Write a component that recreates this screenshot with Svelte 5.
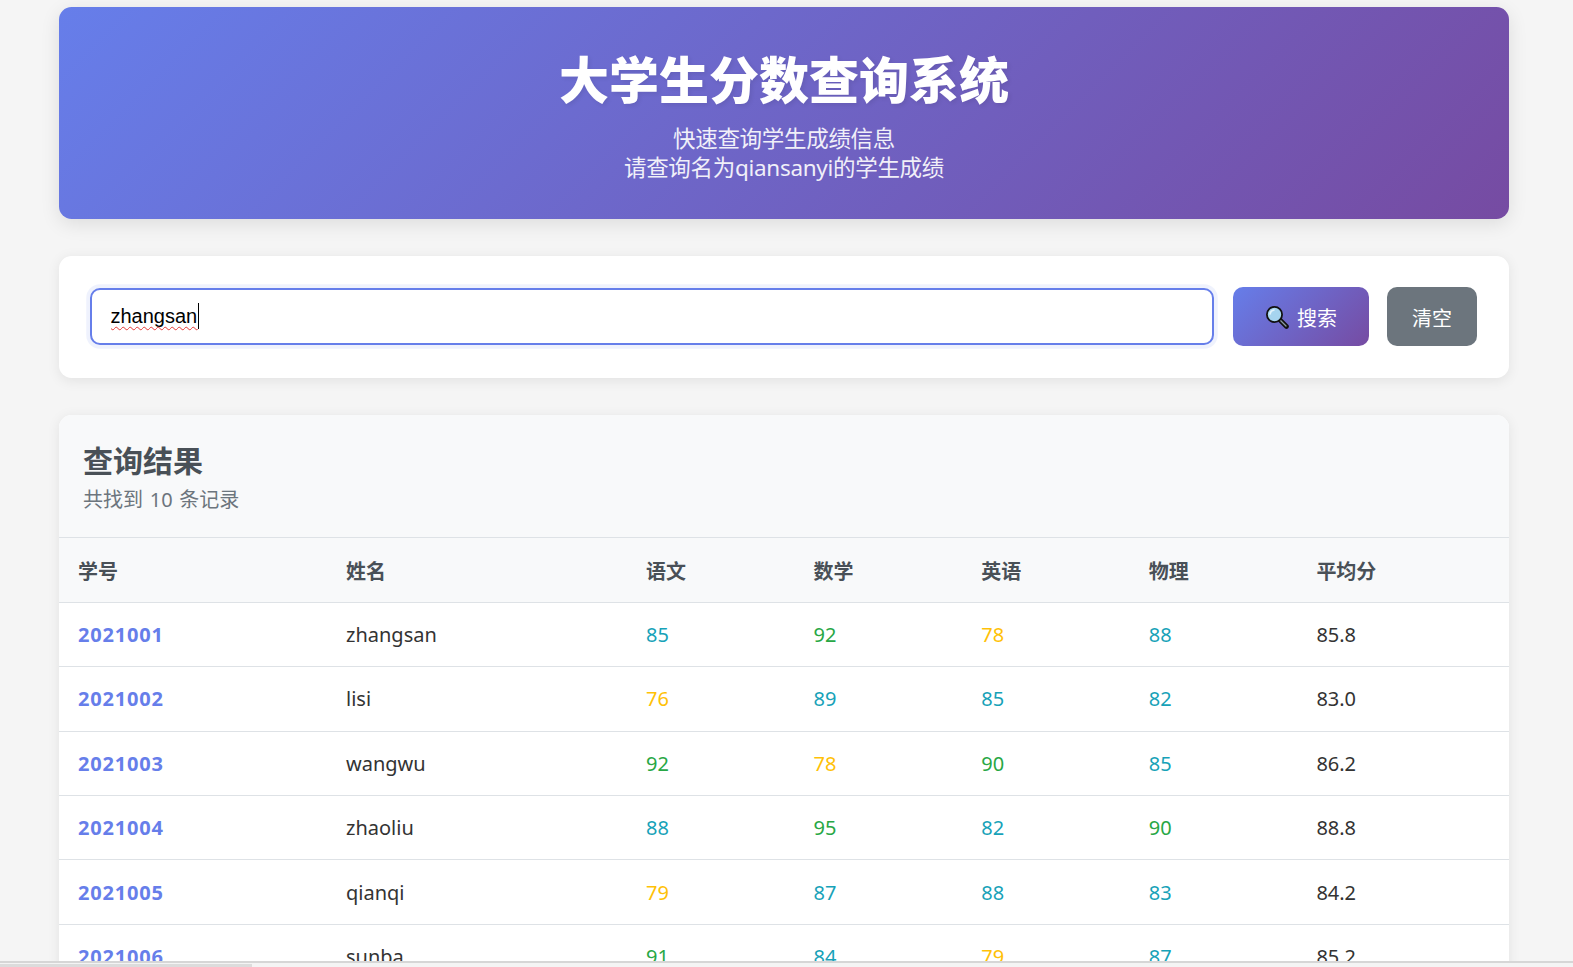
<script>
  const rows = [
    ['2021001', 'zhangsan', [85, 92, 78, 88], '85.8'],
    ['2021002', 'lisi', [76, 89, 85, 82], '83.0'],
    ['2021003', 'wangwu', [92, 78, 90, 85], '86.2'],
    ['2021004', 'zhaoliu', [88, 95, 82, 90], '88.8'],
    ['2021005', 'qianqi', [79, 87, 88, 83], '84.2'],
    ['2021006', 'sunba', [91, 84, 79, 87], '85.2']
  ];
  const heads = ['学号', '姓名', '语文', '数学', '英语', '物理', '平均分'];
  const grade = (s) => (s >= 90 ? 'excellent' : s >= 80 ? 'good' : 'pass');
</script>

<div class="page">
  <main class="container">
    <header class="hero">
      <h1>大学生分数查询系统</h1>
      <p>快速查询学生成绩信息<br />请查询名为qiansanyi的学生成绩</p>
    </header>

    <section class="search">
      <div class="field">
        <input type="text" value="zhangsan" spellcheck="false" />
        <span class="squiggle" aria-hidden="true">zhangsan</span>
      </div>
      <button class="btn primary">
        <svg class="lens" viewBox="0 0 24 24" width="24" height="24" aria-hidden="true">
          <path d="M14.5 14.5 L21.5 21.5" stroke="#111" stroke-width="4.6" stroke-linecap="round" />
          <path d="M15.5 15.5 L21 21" stroke="#8a9aa0" stroke-width="1.4" stroke-linecap="round" />
          <circle cx="9.5" cy="9.5" r="7.6" fill="#a6d4ef" stroke="#111" stroke-width="1.8" />
          <path d="M5 9 A5 5 0 0 1 9 5" fill="none" stroke="#e4f4fc" stroke-width="1.6" stroke-linecap="round" />
        </svg>
        <span>搜索</span>
      </button>
      <button class="btn secondary">清空</button>
    </section>

    <section class="results">
      <div class="results-head">
        <h2>查询结果</h2>
        <p>共找到 10 条记录</p>
      </div>
      <table>
        <thead>
          <tr>
            {#each heads as h}<th>{h}</th>{/each}
          </tr>
        </thead>
        <tbody>
          {#each rows as r}
            <tr>
              <td class="id">{r[0]}</td>
              <td>{r[1]}</td>
              {#each r[2] as s}<td class={grade(s)}>{s}</td>{/each}
              <td>{r[3]}</td>
            </tr>
          {/each}
        </tbody>
      </table>
    </section>
  </main>
  <div class="scrollbar" aria-hidden="true"><div class="thumb"></div></div>
</div>

<style>
  :global(body) {
    margin: 0;
    background: #f5f5f5;
    overflow: hidden;
  }
  .page {
    height: 967px;
    overflow: hidden;
    position: relative;
    font-family: "Noto Sans", "Noto Sans CJK SC", sans-serif;
    color: #333;
  }
  .container {
    width: 1450px;
    margin-left: 59px;
    padding-top: 7px;
  }
  .hero {
    height: 212px;
    box-sizing: border-box;
    padding-top: 35px;
    border-radius: 12.5px;
    background: linear-gradient(135deg, #667eea 0%, #764ba2 100%);
    box-shadow: 0 5px 19px rgba(0, 0, 0, 0.1);
    color: #fff;
    text-align: center;
  }
  .hero h1 {
    margin: 0 0 12px;
    font-size: 50px;
    line-height: 70px;
    font-weight: 900;
    font-family: "Noto Sans CJK SC", sans-serif;
    text-shadow: 2px 2px 4px rgba(0, 0, 0, 0.08);
  }
  .hero p {
    margin: 0;
    font-size: 22.5px;
    line-height: 29px;
    letter-spacing: -0.3px;
    opacity: 0.9;
  }
  .search {
    margin-top: 37px;
    height: 122px;
    box-sizing: border-box;
    padding: 31px 32px 32px 31px;
    display: flex;
    gap: 18px;
    align-items: center;
    background: #fff;
    border-radius: 12.5px;
    box-shadow: 0 2.5px 12.5px rgba(0, 0, 0, 0.08);
  }
  .field {
    flex: 1;
    position: relative;
    margin-right: 1px;
  }
  input {
    display: block;
    width: 100%;
    height: 57px;
    box-sizing: border-box;
    padding: 0 18.5px;
    border: 2.5px solid #667eea;
    border-radius: 10px;
    outline: none;
    box-shadow: 0 0 0 3.75px rgba(102, 126, 234, 0.1);
    font: 20px "Liberation Sans", sans-serif;
    color: #000;
  }
  .squiggle {
    position: absolute;
    left: 21px;
    top: 15px;
    font: 20px/26px "Liberation Sans", sans-serif;
    color: transparent;
    text-decoration: underline wavy #e53935 1.2px;
    text-decoration-skip-ink: none;
    text-underline-offset: 3px;
    border-right: 1px solid #000;
  }
  .btn {
    height: 59px;
    border: 0;
    border-radius: 10px;
    color: #fff;
    font-size: 20px;
    font-family: "Noto Sans CJK SC", sans-serif;
    display: inline-flex;
    align-items: center;
    justify-content: center;
    padding: 1px 0 0;
  }
  .primary {
    width: 136px;
    gap: 8px;
    background: linear-gradient(135deg, #667eea 0%, #764ba2 100%);
  }
  .secondary {
    width: 90px;
    background: #6c757d;
  }
  .results {
    margin-top: 37px;
    background: #fff;
    border-radius: 12.5px 12.5px 0 0;
    box-shadow: 0 2.5px 12.5px rgba(0, 0, 0, 0.08);
    overflow: hidden;
  }
  .results-head {
    height: 123px;
    box-sizing: border-box;
    padding: 23px 24px 0;
    background: #f8f9fa;
    border-bottom: 1px solid #dee2e6;
  }
  .results-head h2 {
    margin: 0;
    font-size: 30px;
    line-height: 42px;
    font-weight: 700;
    color: #495057;
    font-family: "Noto Sans CJK SC", sans-serif;
  }
  .results-head p {
    margin: 6px 0 0;
    font-size: 20px;
    line-height: 28px;
    word-spacing: 1.5px;
    color: #6c757d;
  }
  table {
    width: 100%;
    border-collapse: collapse;
    table-layout: fixed;
    font-size: 20px;
  }
  th,
  td {
    height: 64.4px;
    box-sizing: border-box;
    padding: 1px 19px 0;
    text-align: left;
    border-bottom: 1px solid #dee2e6;
    line-height: 28px;
  }
  th {
    padding-top: 3px;
    background: #f8f9fa;
    color: #495057;
    font-weight: 700;
    font-family: "Noto Sans CJK SC", sans-serif;
  }
  th:nth-child(1) { width: 268px; }
  th:nth-child(2) { width: 300px; }
  th:nth-child(n + 3):nth-child(-n + 6) { width: 167.6px; }
  .id {
    color: #667eea;
    font-weight: 700;
    letter-spacing: 0.8px;
  }
  .excellent { color: #28a745; }
  .good { color: #17a2b8; }
  .pass { color: #ffc107; }
  .scrollbar {
    position: absolute;
    left: 0;
    right: 0;
    bottom: 0;
    height: 6px;
    box-sizing: border-box;
    background: #f4f4f4;
    border-top: 2px solid #d6d6d6;
  }
  .thumb {
    width: 252px;
    height: 3px;
    margin-top: 1px;
    background: #dcdcdc;
  }
</style>
